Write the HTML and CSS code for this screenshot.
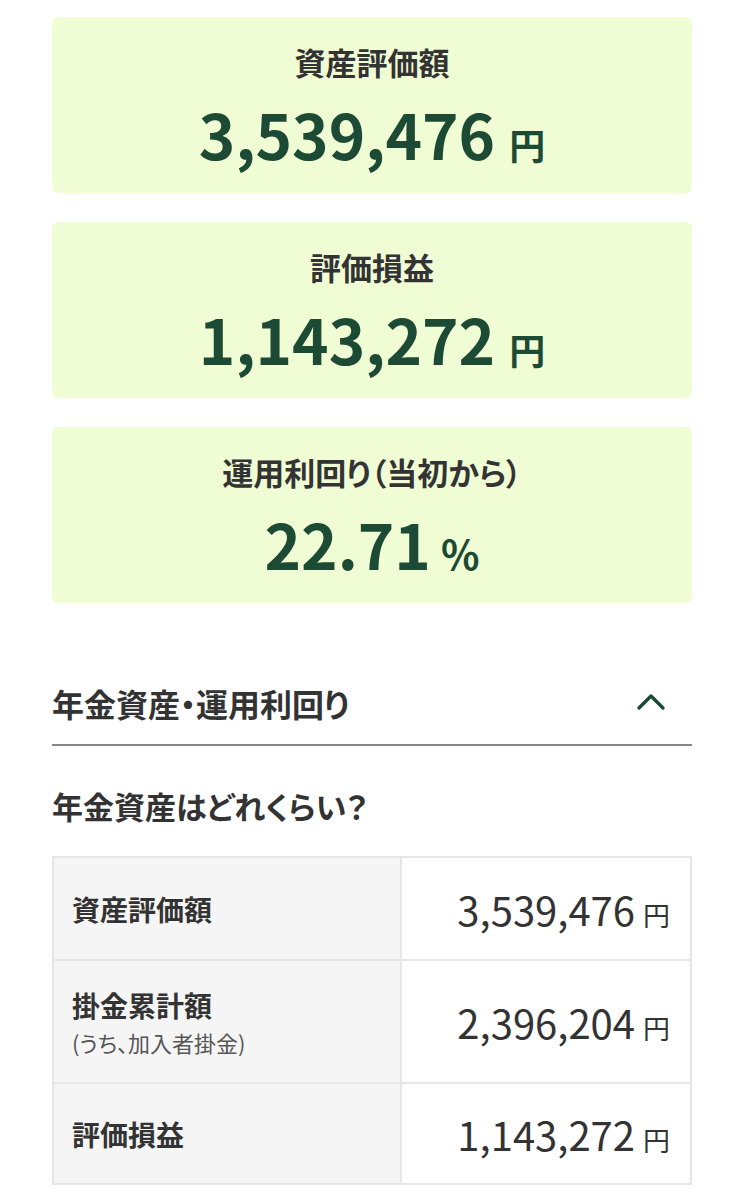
FILE: index.html
```html
<!DOCTYPE html>
<html lang="ja">
<head>
<meta charset="utf-8">
<title>年金資産</title>
<link rel="stylesheet" href="styles.css">
</head>
<body>
<main class="page">
  <section class="summary">
    <div class="card">
      <div class="card-title">資産評価額</div>
      <div class="card-value"><span class="num">3,539,476</span><span class="unit">円</span></div>
    </div>
    <div class="card">
      <div class="card-title">評価損益</div>
      <div class="card-value"><span class="num">1,143,272</span><span class="unit">円</span></div>
    </div>
    <div class="card">
      <div class="card-title">運用利回り（当初から）</div>
      <div class="card-value"><span class="num">22.71</span><span class="unit pct">%</span></div>
    </div>
  </section>

  <section class="accordion">
    <div class="acc-head">
      <h2 class="acc-title">年金資産・運用利回り</h2>
      <svg class="chevron" width="30" height="18" viewBox="0 0 30 18"><polyline points="3,15 15,3 27,15" fill="none" stroke="#1c4a34" stroke-width="3.4" stroke-linecap="round" stroke-linejoin="round"/></svg>
    </div>
    <h3 class="sub-title">年金資産はどれくらい？</h3>
    <table class="assets">
      <tr class="r1">
        <th><span class="lbl">資産評価額</span></th>
        <td><span class="val">3,539,476</span><span class="yen">円</span></td>
      </tr>
      <tr class="r2">
        <th><span class="lbl">掛金累計額</span><span class="note">(うち、加入者掛金)</span></th>
        <td><span class="val">2,396,204</span><span class="yen">円</span></td>
      </tr>
      <tr class="r3">
        <th><span class="lbl">評価損益</span></th>
        <td><span class="val">1,143,272</span><span class="yen">円</span></td>
      </tr>
    </table>
  </section>
</main>
</body>
</html>
```

FILE: styles.css
```css
html, body {
  margin: 0;
  padding: 0;
  background: #ffffff;
}
body {
  font-family: "Noto Sans CJK JP", "Noto Sans", sans-serif;
  color: #333333;
}
.page {
  padding: 17px 52px 0 52px;
}
.summary {
  display: flex;
  flex-direction: column;
  gap: 29px;
}
.card {
  background: #f0fcd3;
  border-radius: 6px;
  height: 176px;
  box-sizing: border-box;
  padding-top: 25px;
  display: flex;
  flex-direction: column;
  align-items: center;
}
.card-title {
  font-size: 31px;
  font-weight: 700;
  line-height: 40px;
  color: #333333;
  font-feature-settings: "palt";
}
.card-value {
  margin-top: 13px;
  line-height: 76px;
  color: #1c4a34;
  font-weight: 700;
  display: flex;
  align-items: baseline;
}
.num {
  font-size: 62px;
}
.unit {
  font-size: 36px;
  margin-left: 14px;
}
.unit.pct {
  font-size: 40px;
  margin-left: 10px;
}
.accordion {
  margin-top: 58px;
}
.acc-head {
  display: flex;
  justify-content: space-between;
  align-items: center;
  height: 85px;
  border-bottom: 2px solid #888888;
  box-sizing: border-box;
  padding-right: 26px;
}
.acc-title {
  margin: 0;
  font-size: 32px;
  font-weight: 700;
  line-height: 40px;
  font-feature-settings: "palt";
}
.chevron {
  display: block;
  margin-top: -2px;
}
.sub-title {
  margin: 40px 0 0 0;
  font-size: 31px;
  font-weight: 700;
  line-height: 40px;
  font-feature-settings: "palt";
}
.assets {
  margin-top: 30px;
  width: 100%;
  border-collapse: collapse;
  border: 2px solid #e6e6e6;
}
.assets th, .assets td {
  border: 2px solid #e6e6e6;
}
.assets th {
  width: 348px;
  box-sizing: border-box;
  background: #f5f5f5;
  text-align: left;
  padding: 0 0 0 18px;
  font-weight: 700;
  vertical-align: middle;
}
.assets td {
  text-align: right;
  padding: 0 20px 0 0;
  vertical-align: middle;
  background: #ffffff;
}
.r1 { height: 103px; }
.r2 { height: 123px; }
.r3 { height: 101px; }
.lbl {
  display: block;
  font-size: 28px;
  line-height: 36px;
  color: #333333;
}
.note {
  display: block;
  font-size: 22px;
  font-weight: 400;
  line-height: 30px;
  color: #555555;
  margin-top: 4px;
  font-feature-settings: "palt";
}
.val {
  font-size: 40px;
  font-weight: 400;
  color: #333333;
  line-height: 50px;
}
.yen {
  font-size: 27px;
  font-weight: 400;
  color: #333333;
  margin-left: 8px;
}
```
